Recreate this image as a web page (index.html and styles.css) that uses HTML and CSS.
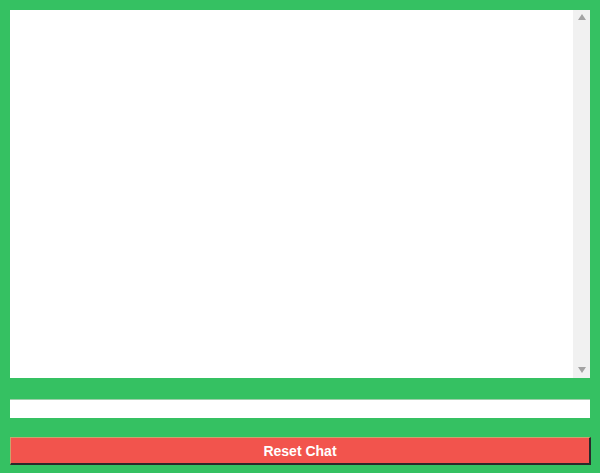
FILE: index.html
```html
<!DOCTYPE html>
<html>
<head>
<meta charset="utf-8">
<link rel="stylesheet" href="styles.css">
</head>
<body>
<div class="app">
  <div class="logbox">
    <textarea class="log" readonly></textarea>
    <div class="scrollbar">
      <span class="arrow up"></span>
      <span class="arrow down"></span>
    </div>
  </div>
  <input class="entry" type="text">
  <button class="reset">Reset Chat</button>
</div>
</body>
</html>
```
FILE: styles.css
```css
html, body {
  margin: 0;
  padding: 0;
  background: #35c162;
  height: 100%;
}
.app {
  box-sizing: border-box;
  padding: 10px;
  display: flex;
  flex-direction: column;
  width: 600px;
}
.logbox {
  display: flex;
  width: 580px;
  height: 368px;
  background: #fff;
}
.log {
  flex: 1;
  box-sizing: border-box;
  height: 100%;
  margin: 0;
  border: none;
  background: #fff;
  resize: none;
  overflow: hidden;
  outline: none;
}
.scrollbar {
  width: 17px;
  background: #f1f1f1;
  display: flex;
  flex-direction: column;
  justify-content: space-between;
  align-items: center;
  padding: 4px 0 5px 0;
}
.arrow {
  width: 0;
  height: 0;
  border-left: 4px solid transparent;
  border-right: 4px solid transparent;
}
.arrow.up {
  border-bottom: 6px solid #a3a3a3;
}
.arrow.down {
  border-top: 6px solid #a3a3a3;
}
.entry {
  box-sizing: border-box;
  width: 580px;
  height: 19px;
  margin: 21px 0 0 0;
  border: none;
  border-top: 1px solid #9ccfa9;
  background: #fff;
  outline: none;
}
.reset {
  box-sizing: border-box;
  width: 581px;
  height: 28px;
  margin: 19px 0 0 0;
  background: #f2544d;
  border-top: 1px solid #c9a36e;
  border-left: 1px solid #c9a36e;
  border-right: 2px solid #2a2a2a;
  border-bottom: 2px solid #2a2a2a;
  color: #fff;
  font-family: "Liberation Sans", Arial, sans-serif;
  font-weight: bold;
  font-size: 14px;
  padding: 0;
}
```
